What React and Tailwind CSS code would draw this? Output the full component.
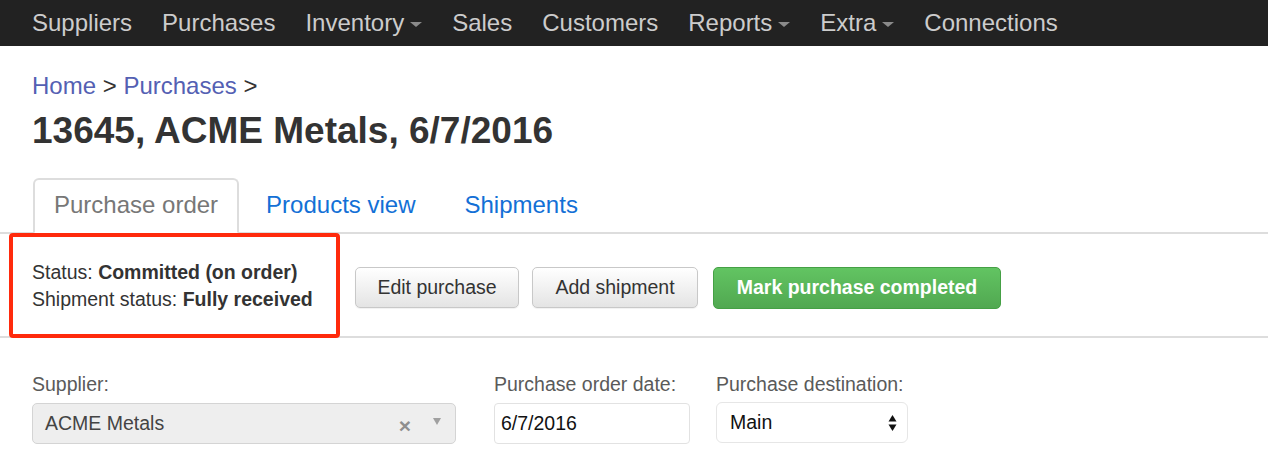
import React from 'react';

const navItems = [
  { label: 'Suppliers' },
  { label: 'Purchases' },
  { label: 'Inventory', caret: true },
  { label: 'Sales' },
  { label: 'Customers' },
  { label: 'Reports', caret: true },
  { label: 'Extra', caret: true },
  { label: 'Connections' },
];

const Caret = () => (
  <span className="ml-[6px] mt-[2px] inline-block w-0 h-0 border-x-[6px] border-t-[5px] border-x-transparent border-t-[#8a8a8a]"></span>
);

const Navbar = () => (
  <nav className="h-[46px] bg-[#222222] flex items-center px-8 gap-[30px]">
    {navItems.map((item) => (
      <a key={item.label} className="flex items-center text-[24px] leading-none text-[#cccccc]">
        {item.label}
        {item.caret && <Caret />}
      </a>
    ))}
  </nav>
);

const Tabs = () => (
  <div className="mt-[25px] flex pl-[33px] border-b-2 border-[#dddddd]">
    <a className="h-[56px] -mb-[2px] flex items-center pb-[3px] px-[19px] mr-[5px] border-2 border-[#dddddd] border-b-white bg-white rounded-t-[6px] text-[24px] text-[#777777]">
      Purchase order
    </a>
    <a className="h-[56px] -mb-[2px] flex items-center pb-[3px] px-[20px] mr-[5px] border-2 border-transparent text-[24px] text-[#1370d6]">
      Products view
    </a>
    <a className="h-[56px] -mb-[2px] flex items-center pb-[3px] px-[20px] border-2 border-transparent text-[24px] text-[#1370d6]">
      Shipments
    </a>
  </div>
);

const DefaultButton = ({ children, className = '' }) => (
  <button className={`h-[41px] rounded-[5px] border-[1.5px] border-[#c8c8c8] bg-gradient-to-b from-white to-[#e4e4e4] text-[#333333] text-[19.5px] shadow-[0_1px_1px_rgba(0,0,0,0.06)] ${className}`}>
    {children}
  </button>
);

const StatusRow = () => (
  <div className="flex items-center h-[104px] pl-8 border-b-2 border-[#dddddd]">
    <div className="relative self-stretch w-[308px] flex flex-col justify-center text-[19.5px] leading-[27px] text-[#333333] pt-[1px]">
      <div>
        Status: <b className="font-bold">Committed (on order)</b>
      </div>
      <div>
        Shipment status: <b className="font-bold">Fully received</b>
      </div>
      <div className="absolute -left-[23px] right-0 -top-[1px] -bottom-[2px] border-4 border-[#ff2a0c] rounded-[4px] pointer-events-none"></div>
    </div>
    <div className="flex items-center mt-[5px] ml-[15px]">
      <DefaultButton className="w-[164px]">Edit purchase</DefaultButton>
      <DefaultButton className="w-[166px] ml-[13px]">Add shipment</DefaultButton>
      <button className="ml-[15px] w-[288px] h-[42px] rounded-[5px] border-[1.5px] border-[#45a045] bg-gradient-to-b from-[#62c462] to-[#51a851] text-white font-bold text-[19.5px]">
        Mark purchase completed
      </button>
    </div>
  </div>
);

const UpDown = () => (
  <svg width="9" height="18" viewBox="0 0 9 18" className="text-[#111111]">
    <path d="M4.5 1 L8.5 7.5 L0.5 7.5 Z" fill="currentColor" />
    <path d="M4.5 17 L8.5 10.5 L0.5 10.5 Z" fill="currentColor" />
  </svg>
);

const Form = () => (
  <div className="flex pl-8 mt-[33px] text-[19.5px]">
    <div className="w-[424px]">
      <div className="leading-[27px] text-[#5a5a5a]">Supplier:</div>
      <div className="mt-[5px] h-[41px] flex items-center rounded-[5px] border-[1.5px] border-[#d4d4d4] bg-[#eeeeee] pl-[12px] pr-[14px]">
        <span className="flex-1 text-[#444444]">ACME Metals</span>
        <span className="text-[#8f8f8f] font-bold text-[21px] leading-none mt-[3px]">×</span>
        <span className="ml-[22px] mb-[4px] w-0 h-0 border-x-[4px] border-t-[7px] border-x-transparent border-t-[#a0a0a0]"></span>
      </div>
    </div>
    <div className="w-[196px] ml-[38px]">
      <div className="leading-[27px] text-[#5a5a5a] whitespace-nowrap">Purchase order date:</div>
      <div className="mt-[5px] h-[41px] flex items-center rounded-[4px] border-[1.5px] border-[#e2e2e2] bg-white pl-[6px] text-[#111111]">
        6/7/2016
      </div>
    </div>
    <div className="w-[192px] ml-[26px]">
      <div className="leading-[27px] text-[#5a5a5a] whitespace-nowrap">Purchase destination:</div>
      <div className="mt-[4px] h-[41px] flex items-center rounded-[6px] border-[1.5px] border-[#e6e6e6] bg-white pl-[13px] pr-[10px] text-[#111111]">
        <span className="flex-1">Main</span>
        <UpDown />
      </div>
    </div>
  </div>
);

export default function App() {
  return (
    <div className="w-[1268px] h-[462px] overflow-hidden bg-white font-['Liberation_Sans',Arial,sans-serif]">
      <Navbar />
      <div className="pl-8 mt-[25px] text-[24px] leading-[29px] text-[#333333]">
        <a className="text-[#5460b3]">Home</a> &gt; <a className="text-[#5460b3]">Purchases</a> &gt;
      </div>
      <h1 className="pl-8 mt-[9px] text-[37px] leading-[44px] font-bold text-[#333333]">
        13645, ACME Metals, 6/7/2016
      </h1>
      <Tabs />
      <StatusRow />
      <Form />
    </div>
  );
}
